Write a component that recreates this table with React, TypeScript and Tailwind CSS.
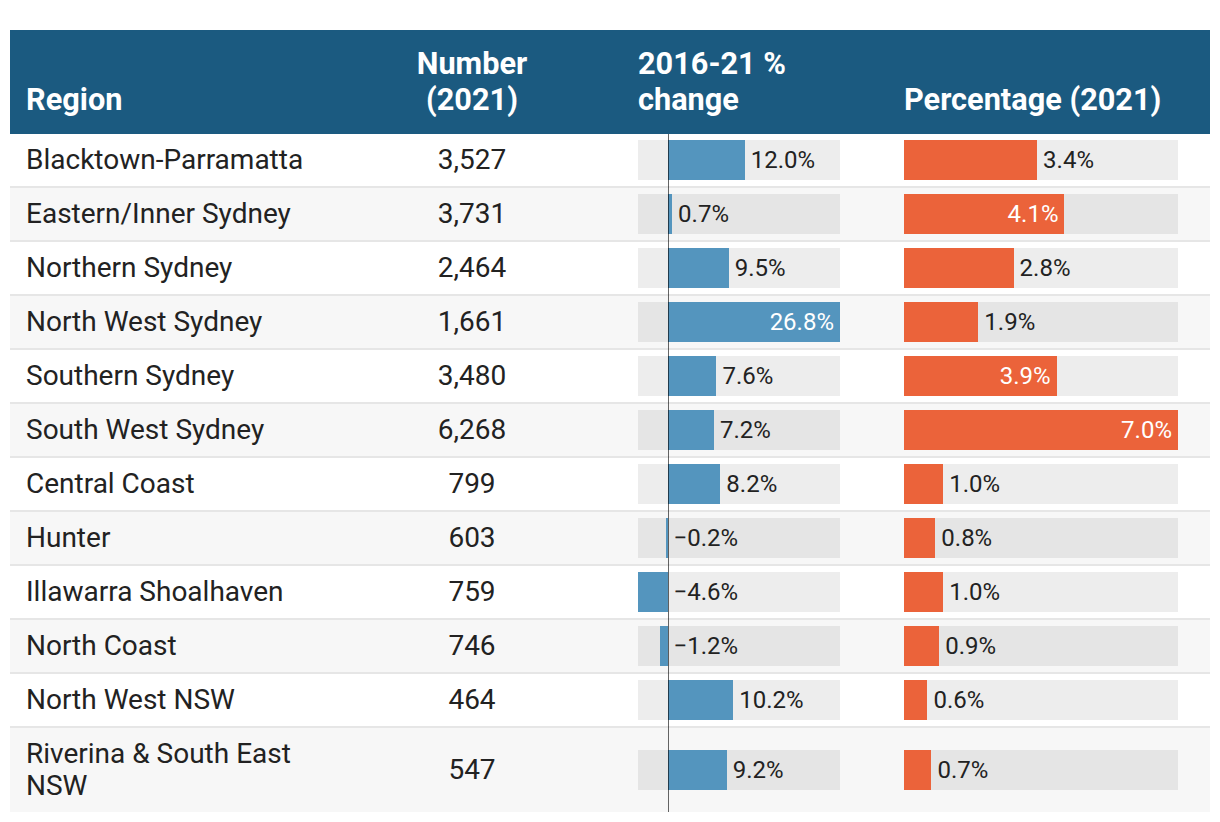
const rows = [
  { region: "Blacktown-Parramatta", number: "3,527", change: 12.0, pct: 3.4 },
  { region: "Eastern/Inner Sydney", number: "3,731", change: 0.7, pct: 4.1 },
  { region: "Northern Sydney", number: "2,464", change: 9.5, pct: 2.8 },
  { region: "North West Sydney", number: "1,661", change: 26.8, pct: 1.9 },
  { region: "Southern Sydney", number: "3,480", change: 7.6, pct: 3.9 },
  { region: "South West Sydney", number: "6,268", change: 7.2, pct: 7.0 },
  { region: "Central Coast", number: "799", change: 8.2, pct: 1.0 },
  { region: "Hunter", number: "603", change: -0.2, pct: 0.8 },
  { region: "Illawarra Shoalhaven", number: "759", change: -4.6, pct: 1.0 },
  { region: "North Coast", number: "746", change: -1.2, pct: 0.9 },
  { region: "North West NSW", number: "464", change: 10.2, pct: 0.6 },
  { region: "Riverina & South East NSW", number: "547", change: 9.2, pct: 0.7 },
];

// change track: -4.6 .. 26.8 over 202px
const CHANGE_W = 202;
const CHANGE_MIN = -4.6;
const CHANGE_MAX = 26.8;
const cScale = CHANGE_W / (CHANGE_MAX - CHANGE_MIN);
const zeroX = -CHANGE_MIN * cScale;

const PCT_W = 274;
const PCT_MAX = 7.0;

const fmt = (v: number) => (v < 0 ? "\u2212" : "") + Math.abs(v).toFixed(1) + "%";

function ChangeBar({ value }: { value: number }) {
  const left = value < 0 ? zeroX + value * cScale : zeroX;
  const width = Math.abs(value) * cScale;
  const inside = width > CHANGE_W * 0.5;
  const end = zeroX + Math.max(value, 0) * cScale;
  return (
    <div className="relative h-10 w-[202px] bg-black/[0.07]">
      <div className="absolute top-0 h-10 bg-[#5495be]" style={{ left, width }} />
      {inside ? (
        <span
          className="absolute top-0 flex h-10 items-center pr-[6px] text-[24px] text-white"
          style={{ right: CHANGE_W - end }}
        >
          {fmt(value)}
        </span>
      ) : (
        <span
          className="absolute top-0 flex h-10 items-center text-[24px] text-[#222]"
          style={{ left: end + 6 }}
        >
          {fmt(value)}
        </span>
      )}
    </div>
  );
}

function PctBar({ value }: { value: number }) {
  const width = (value / PCT_MAX) * PCT_W;
  const inside = width > PCT_W * 0.5;
  return (
    <div className="relative h-10 w-[274px] bg-black/[0.07]">
      <div className="absolute left-0 top-0 h-10 bg-[#eb633a]" style={{ width }} />
      {inside ? (
        <span
          className="absolute top-0 flex h-10 items-center pr-[6px] text-[24px] text-white"
          style={{ right: PCT_W - width }}
        >
          {fmt(value)}
        </span>
      ) : (
        <span
          className="absolute top-0 flex h-10 items-center text-[24px] text-[#222]"
          style={{ left: width + 6 }}
        >
          {fmt(value)}
        </span>
      )}
    </div>
  );
}

export default function App() {
  return (
    <div className="min-h-screen bg-white px-[10px] pt-[30px] font-['Roboto',sans-serif] text-[#222]">
      <div className="w-[1200px]">
        <div className="grid grid-cols-[312px_300px_266px_322px] items-end bg-[#1b5a80] py-4 text-[30.7px] font-bold leading-9 text-white">
          <div className="pl-4">Region</div>
          <div className="text-center">
            Number
            <br />
            (2021)
          </div>
          <div className="pl-4">
            2016-21 %
            <br />
            change
          </div>
          <div className="pl-4">Percentage (2021)</div>
        </div>

        <div className="relative">
          {rows.map((r, i) => (
            <div
              key={r.region}
              className={`grid grid-cols-[312px_300px_266px_322px] items-center ${
                i % 2 === 1 ? "bg-[#f7f7f7]" : "bg-white"
              } ${i < rows.length - 1 ? "border-b-2 border-[#e6e6e6]" : ""}`}
            >
              <div className="py-[10px] pl-4 pr-4 text-[28px] leading-[32px]">{r.region}</div>
              <div className="text-center text-[28px] leading-[32px]">{r.number}</div>
              <div className="py-[6px] pl-4">
                <ChangeBar value={r.change} />
              </div>
              <div className="py-[6px] pl-4">
                <PctBar value={r.pct} />
              </div>
            </div>
          ))}
          <div className="pointer-events-none absolute bottom-0 top-0 left-[658px] w-px bg-black/60" />
        </div>
      </div>
    </div>
  );
}
